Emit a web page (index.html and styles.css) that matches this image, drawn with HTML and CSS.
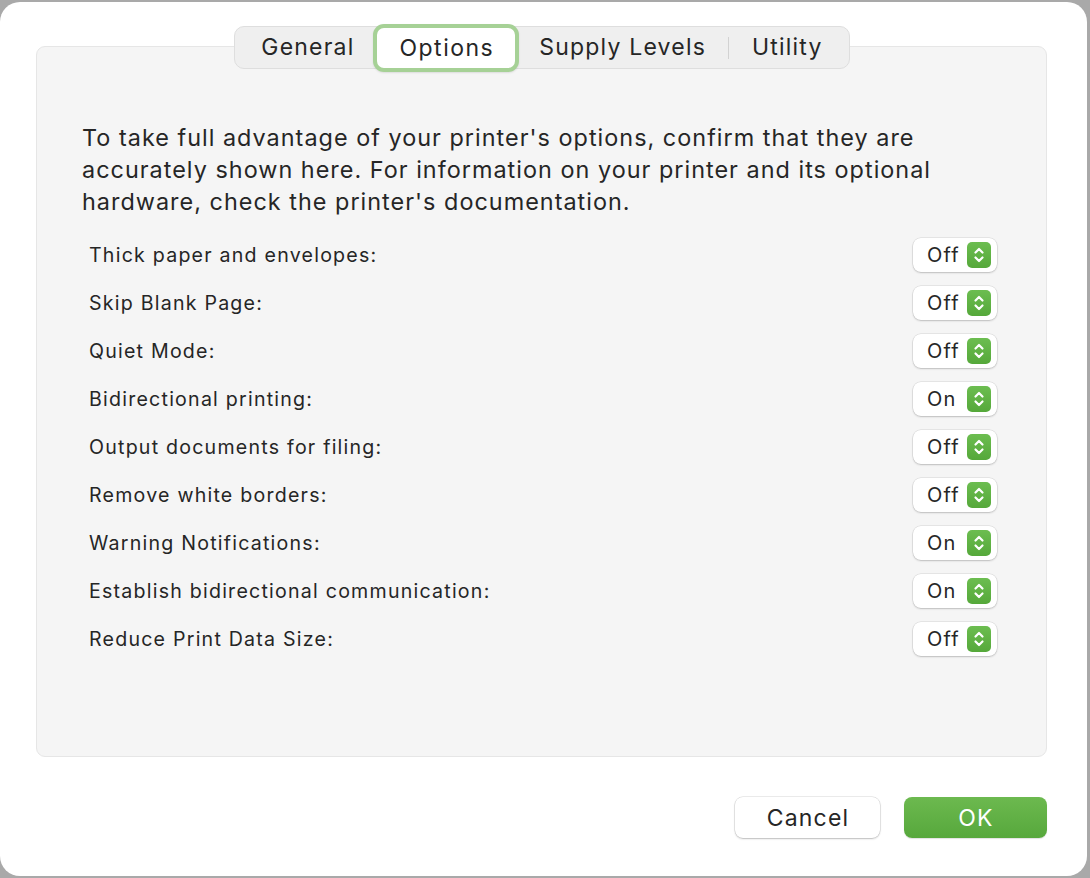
FILE: index.html
```html
<!DOCTYPE html>
<html>
<head>
<meta charset="utf-8">
<link rel="stylesheet" href="styles.css">
</head>
<body>
<div class="window">
  <div class="tabs-wrap">
    <div class="tabs">
      <div class="tab t-general">General</div>
      <div class="tab selected">Options</div>
      <div class="tab t-supply">Supply Levels</div>
      <div class="sep"></div>
      <div class="tab t-utility">Utility</div>
    </div>
  </div>
  <div class="panel">
    <p class="intro">To take full advantage of your printer's options, confirm that they are accurately shown here. For information on your printer and its optional hardware, check the printer's documentation.</p>
    <div class="rows">
      <div class="row"><span class="label">Thick paper and envelopes:</span><div class="popup"><span class="val">Off</span><span class="stepper"><svg viewBox="0 0 24 26" width="24" height="26"><path d="M8.5 10.5 L12 7 L15.5 10.5 M8.5 15.5 L12 19 L15.5 15.5" fill="none" stroke="#fff" stroke-width="2.2" stroke-linecap="round" stroke-linejoin="round"/></svg></span></div></div>
      <div class="row"><span class="label">Skip Blank Page:</span><div class="popup"><span class="val">Off</span><span class="stepper"><svg viewBox="0 0 24 26" width="24" height="26"><path d="M8.5 10.5 L12 7 L15.5 10.5 M8.5 15.5 L12 19 L15.5 15.5" fill="none" stroke="#fff" stroke-width="2.2" stroke-linecap="round" stroke-linejoin="round"/></svg></span></div></div>
      <div class="row"><span class="label">Quiet Mode:</span><div class="popup"><span class="val">Off</span><span class="stepper"><svg viewBox="0 0 24 26" width="24" height="26"><path d="M8.5 10.5 L12 7 L15.5 10.5 M8.5 15.5 L12 19 L15.5 15.5" fill="none" stroke="#fff" stroke-width="2.2" stroke-linecap="round" stroke-linejoin="round"/></svg></span></div></div>
      <div class="row"><span class="label">Bidirectional printing:</span><div class="popup"><span class="val">On</span><span class="stepper"><svg viewBox="0 0 24 26" width="24" height="26"><path d="M8.5 10.5 L12 7 L15.5 10.5 M8.5 15.5 L12 19 L15.5 15.5" fill="none" stroke="#fff" stroke-width="2.2" stroke-linecap="round" stroke-linejoin="round"/></svg></span></div></div>
      <div class="row"><span class="label">Output documents for filing:</span><div class="popup"><span class="val">Off</span><span class="stepper"><svg viewBox="0 0 24 26" width="24" height="26"><path d="M8.5 10.5 L12 7 L15.5 10.5 M8.5 15.5 L12 19 L15.5 15.5" fill="none" stroke="#fff" stroke-width="2.2" stroke-linecap="round" stroke-linejoin="round"/></svg></span></div></div>
      <div class="row"><span class="label">Remove white borders:</span><div class="popup"><span class="val">Off</span><span class="stepper"><svg viewBox="0 0 24 26" width="24" height="26"><path d="M8.5 10.5 L12 7 L15.5 10.5 M8.5 15.5 L12 19 L15.5 15.5" fill="none" stroke="#fff" stroke-width="2.2" stroke-linecap="round" stroke-linejoin="round"/></svg></span></div></div>
      <div class="row"><span class="label">Warning Notifications:</span><div class="popup"><span class="val">On</span><span class="stepper"><svg viewBox="0 0 24 26" width="24" height="26"><path d="M8.5 10.5 L12 7 L15.5 10.5 M8.5 15.5 L12 19 L15.5 15.5" fill="none" stroke="#fff" stroke-width="2.2" stroke-linecap="round" stroke-linejoin="round"/></svg></span></div></div>
      <div class="row"><span class="label">Establish bidirectional communication:</span><div class="popup"><span class="val">On</span><span class="stepper"><svg viewBox="0 0 24 26" width="24" height="26"><path d="M8.5 10.5 L12 7 L15.5 10.5 M8.5 15.5 L12 19 L15.5 15.5" fill="none" stroke="#fff" stroke-width="2.2" stroke-linecap="round" stroke-linejoin="round"/></svg></span></div></div>
      <div class="row"><span class="label">Reduce Print Data Size:</span><div class="popup"><span class="val">Off</span><span class="stepper"><svg viewBox="0 0 24 26" width="24" height="26"><path d="M8.5 10.5 L12 7 L15.5 10.5 M8.5 15.5 L12 19 L15.5 15.5" fill="none" stroke="#fff" stroke-width="2.2" stroke-linecap="round" stroke-linejoin="round"/></svg></span></div></div>
    </div>
  </div>
  <div class="buttons">
    <div class="btn cancel">Cancel</div>
    <div class="btn ok">OK</div>
  </div>
</div>
</body>
</html>
```
FILE: styles.css
```css
* { box-sizing: border-box; }
html, body { margin: 0; padding: 0; }
body {
  background: #a9a9a9;
  width: 1090px;
  height: 878px;
  overflow: hidden;
  font-family: Inter, "Noto Sans", "Liberation Sans", sans-serif;
  color: #262626;
}
.window {
  margin-top: 2px;
  width: 1087px;
  height: 874px;
  background: #fff;
  border-radius: 20px;
  padding: 24px 40px 0 36px;
}
.tabs-wrap {
  display: flex;
  justify-content: center;
  margin-bottom: -23px;
  padding-left: 1px;
  position: relative;
  z-index: 1;
}
.tabs {
  display: flex;
  align-items: center;
  height: 43px;
  background: #efefef;
  border: 1px solid #dedede;
  border-radius: 10px;
  padding: 0;
}
.tab {
  font-size: 23px;
  letter-spacing: 1.2px;
  line-height: 41px;
  color: #262626;
}
.t-general { padding: 0 19px 0 26px; }
.t-supply { padding: 0 22px 0 20px; }
.t-utility { padding: 0 26px 0 23px; }
.tab.selected {
  background: #fff;
  border: 4px solid #a6d196;
  border-radius: 11px;
  height: 48px;
  line-height: 40px;
  padding: 0 21px 0 22px;
  letter-spacing: 1.5px;
  box-shadow: 0 1px 2px rgba(0,0,0,0.1);
}
.sep {
  width: 1px;
  height: 22px;
  background: #d2d2d2;
}
.panel {
  height: 711px;
  background: #f5f5f5;
  border: 1px solid #e6e6e6;
  border-radius: 9px;
  padding: 75px 49px 0 45px;
}
.intro {
  margin: 0;
  font-size: 23.4px;
  line-height: 32px;
  letter-spacing: 1.02px;
}
.rows {
  margin-top: 13px;
  padding-left: 7px;
}
.row {
  height: 48px;
  display: flex;
  align-items: center;
  justify-content: space-between;
}
.label {
  font-size: 19.6px;
  letter-spacing: 1.22px;
}
.popup {
  width: 84px;
  height: 34px;
  background: #fff;
  border-radius: 8px;
  box-shadow: 0 0 0 0.5px rgba(0,0,0,0.12), 0 1px 2px rgba(0,0,0,0.18);
  display: flex;
  align-items: center;
  justify-content: space-between;
  padding: 0 6px 0 14px;
}
.val {
  font-size: 20px;
  letter-spacing: 1.2px;
}
.stepper {
  width: 24px;
  height: 26px;
  border-radius: 5px;
  background: linear-gradient(#6cbd50, #55a83a);
  display: flex;
}
.buttons {
  display: flex;
  justify-content: flex-end;
  gap: 24px;
  margin-top: 40px;
}
.btn {
  width: 145px;
  height: 41px;
  border-radius: 8px;
  font-size: 23px;
  letter-spacing: 1.2px;
  display: flex;
  align-items: center;
  justify-content: center;
  padding-left: 1px;
}
.cancel {
  background: #fff;
  box-shadow: 0 0 0 0.5px rgba(0,0,0,0.15), 0 1px 2px rgba(0,0,0,0.2);
}
.ok {
  width: 143px;
  color: #fff;
  background: linear-gradient(#6cb94f, #57a83c);
  box-shadow: 0 1px 1px rgba(0,0,0,0.12);
}
```
